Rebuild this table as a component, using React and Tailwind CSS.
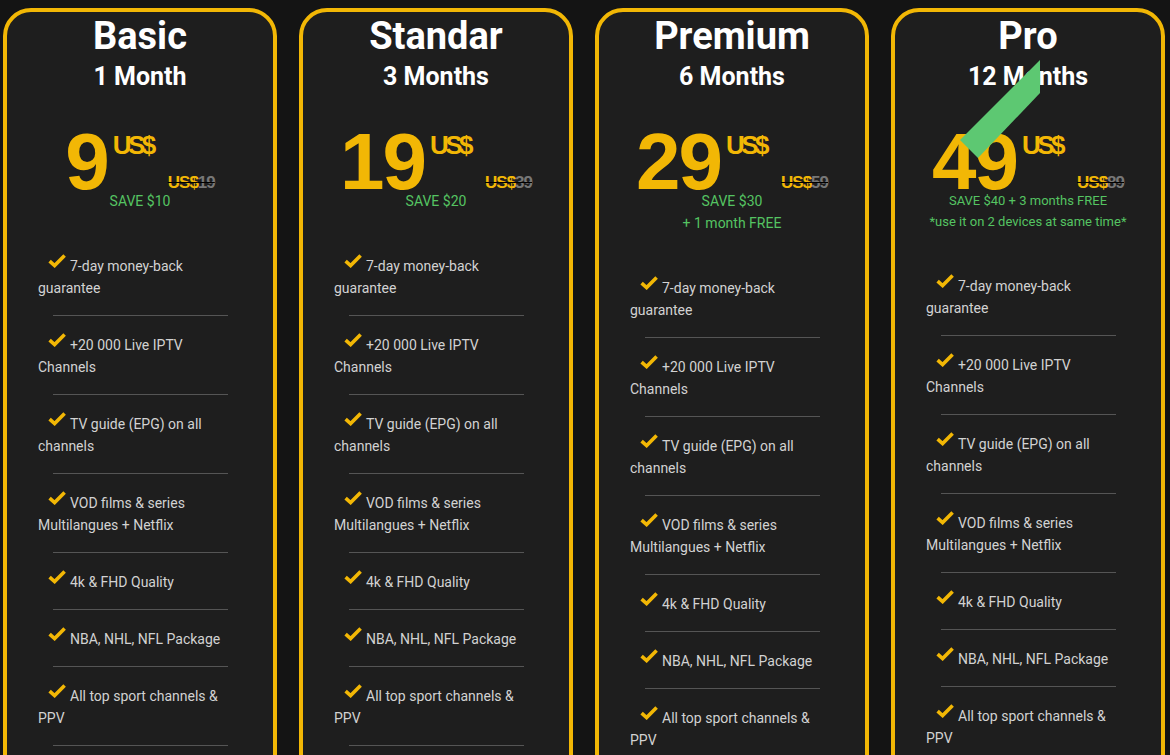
import React from "react";

const FEATURES = [
  "7-day money-back guarantee",
  "+20 000 Live IPTV Channels",
  "TV guide (EPG) on all channels",
  "VOD films & series Multilangues + Netflix",
  "4k & FHD Quality",
  "NBA, NHL, NFL Package",
  "All top sport channels & PPV",
  "Anti-freeze technology",
  "24/7 Support",
];

const PLANS = [
  { name: "Basic", period: "1 Month", price: "9", old: "19", lines: ["SAVE $10"], small: false },
  { name: "Standar", period: "3 Months", price: "19", old: "39", lines: ["SAVE $20"], small: false },
  { name: "Premium", period: "6 Months", price: "29", old: "59", lines: ["SAVE $30", "+ 1 month FREE"], small: false },
  {
    name: "Pro",
    period: "12 Months",
    price: "49",
    old: "89",
    lines: ["SAVE $40 + 3 months FREE", "*use it on 2 devices at same time*"],
    small: true,
    ribbon: true,
  },
];

function Check() {
  return (
    <svg width="18" height="14" viewBox="0 0 18 14" className="inline-block align-baseline mr-[4px] ml-[10px] relative top-[-3px]">
      <path d="M1.6 7.2 L6.6 11.6 L16.6 1.6" fill="none" stroke="#f2b705" strokeWidth="3.6" strokeLinejoin="miter" />
    </svg>
  );
}

function Card({ plan }) {
  return (
    <div className="relative w-[274px] shrink-0 h-[900px] border-4 border-[#f2b705] rounded-[28px] bg-[#1e1e1e] flex flex-col">
      <div className="pt-[5px] text-center text-white font-bold text-[38px] leading-[38px] font-['Roboto',sans-serif]">
        {plan.name}
      </div>
      <div className="mt-[7px] text-center text-white font-bold text-[25px] leading-[30px] font-['Roboto',sans-serif]">
        {plan.period}
      </div>
      <div className="mt-[42px] flex justify-center items-start font-['Liberation_Sans',Arial,sans-serif] font-bold">
        <span className="text-[#f2b705] text-[80px] leading-[56px] tracking-[-2px]">{plan.price}</span>
        <span className="ml-[5px] -mt-[2px] text-[#f2b705] text-[26px] leading-[26px] tracking-[-3.5px]">US$</span>
        <span className="self-end ml-[15px] -mb-[1px] text-[17px] leading-[17px] tracking-[-1px] line-through">
          <span className="text-[#f2b705]">US$</span>
          <span className="text-[#777777]">{plan.old}</span>
        </span>
      </div>
      <div className="mt-0 text-center text-[#55c462] font-['Roboto',sans-serif]">
        {plan.lines.map((l, i) => (
          <div key={i} className={plan.small ? "text-[13px] leading-[21px]" : "text-[14px] leading-[22px]"}>
            {l}
          </div>
        ))}
      </div>
      <ul className="mt-[25px] px-[31px] font-['Roboto',sans-serif] text-[14px] leading-[22px] text-[#d2d2d2]">
        {FEATURES.map((f, i) => (
          <li key={i}>
            <div className="pt-[18px] pb-[16px]">
              <Check />
              {f}
            </div>
            <div className="w-[175px] mx-auto h-px bg-[#555555]" />
          </li>
        ))}
      </ul>
      {plan.ribbon && (
        <svg className="absolute left-[65px] top-[48px]" width="80" height="100" viewBox="0 0 80 100">
          <polygon points="80,0 80,33 18,98 0,80" fill="#5dc872" />
        </svg>
      )}
    </div>
  );
}

export default function App() {
  return (
    <div className="h-[755px] w-[1170px] overflow-hidden bg-[#141414] pl-[3px] pt-[8px] flex gap-[22px]">
      {PLANS.map((p) => (
        <Card key={p.name} plan={p} />
      ))}
    </div>
  );
}
